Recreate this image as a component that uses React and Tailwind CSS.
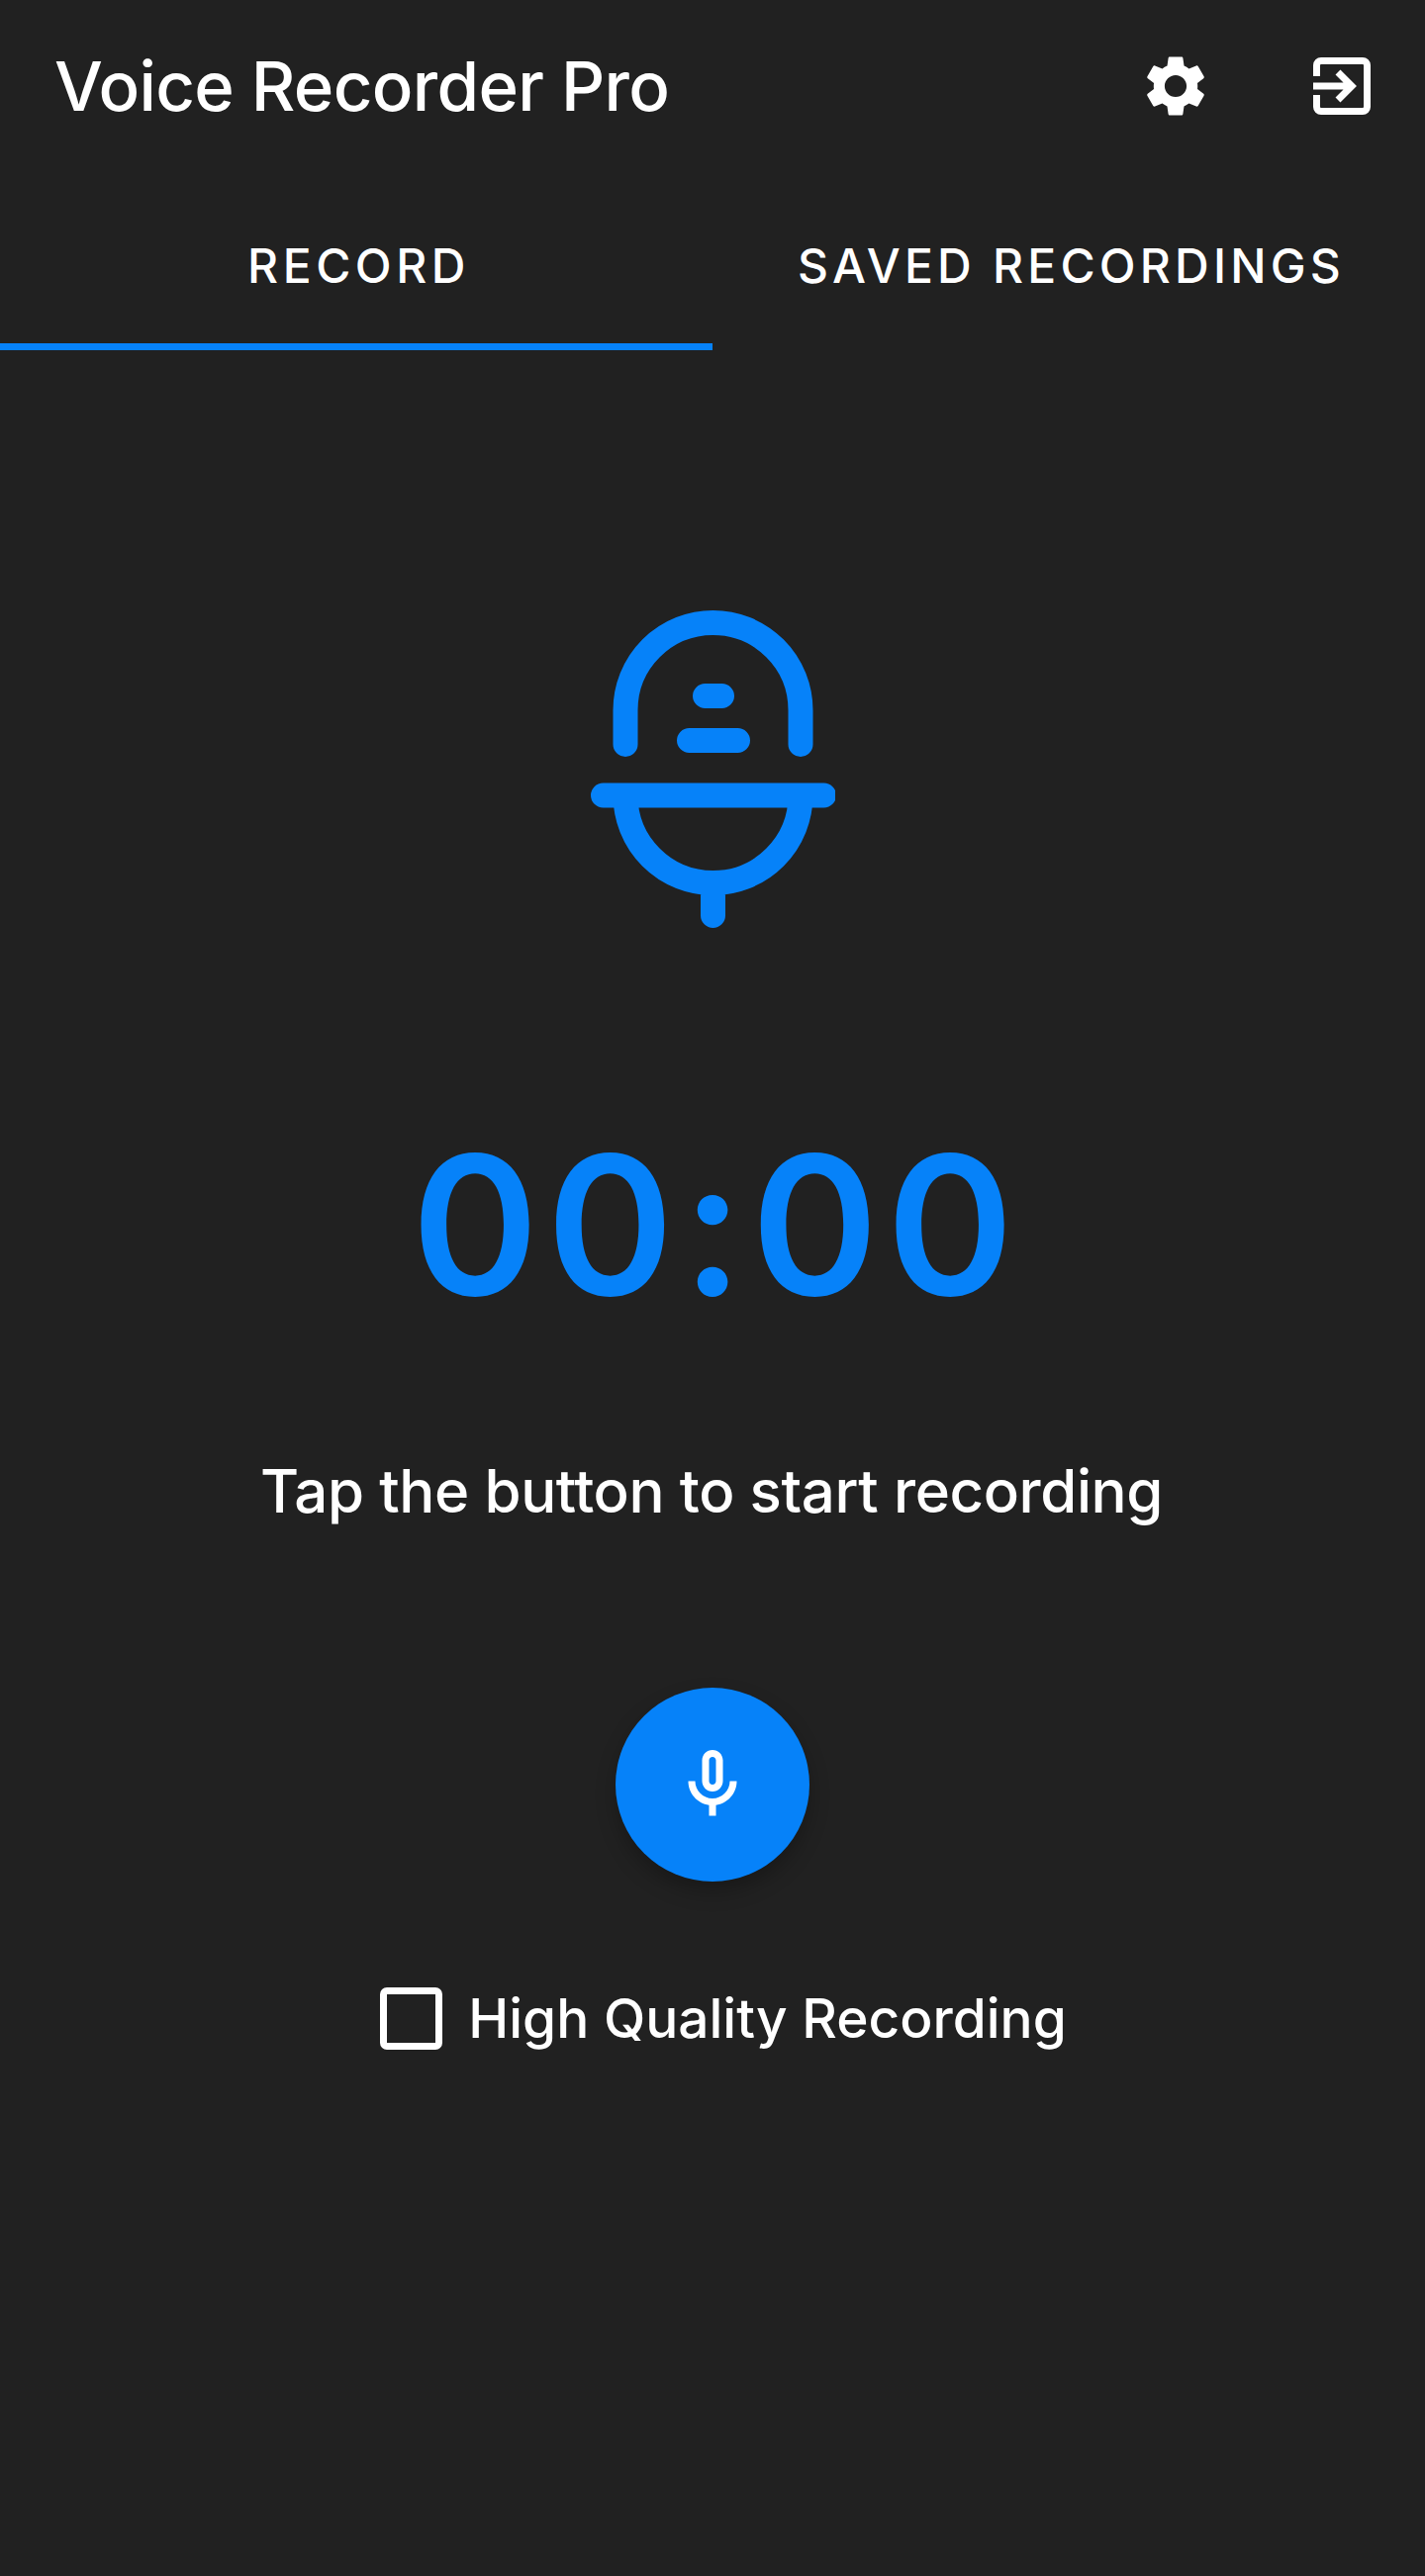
export default function App() {
  const font = { fontFamily: '"Inter", "Liberation Sans", sans-serif' };
  return (
    <div className="w-full h-[2604px] bg-[#212121] text-white flex flex-col overflow-hidden" style={font}>
      <header className="h-[174px] flex items-center pl-[55px]">
        <h1 className="text-[69px] font-medium leading-none tracking-[-0.7px] flex-1">Voice Recorder Pro</h1>
        <div className="flex items-center mr-[55px] gap-[102px]">
          <svg width="74" height="74" viewBox="0 0 24 24" fill="#fff">
            <path d="M19.14 12.94c.04-.3.06-.61.06-.94 0-.32-.02-.64-.07-.94l2.03-1.58c.18-.14.23-.41.12-.61l-1.92-3.32c-.12-.22-.37-.29-.59-.22l-2.39.96c-.5-.38-1.03-.7-1.62-.94l-.36-2.54c-.04-.24-.24-.41-.48-.41h-3.84c-.24 0-.43.17-.47.41l-.36 2.54c-.59.24-1.13.57-1.62.94l-2.39-.96c-.22-.08-.47 0-.59.22L2.74 8.87c-.12.21-.08.47.12.61l2.03 1.58c-.05.3-.09.63-.09.94s.02.64.07.94l-2.03 1.58c-.18.14-.23.41-.12.61l1.92 3.32c.12.22.37.29.59.22l2.39-.96c.5.38 1.03.7 1.62.94l.36 2.54c.05.24.24.41.48.41h3.84c.24 0 .44-.17.47-.41l.36-2.54c.59-.24 1.13-.56 1.62-.94l2.39.96c.22.08.47 0 .59-.22l1.92-3.32c.12-.22.07-.47-.12-.61l-2.01-1.58zM12 15.6c-1.98 0-3.6-1.62-3.6-3.6s1.62-3.6 3.6-3.6 3.6 1.62 3.6 3.6-1.62 3.6-3.6 3.6z" />
          </svg>
          <svg width="58" height="58" viewBox="0 0 58 58" fill="none" stroke="#fff" strokeWidth="7">
            <path d="M3.500 19V8a4.500 4.500 0 0 1 4.500-4.500h42a4.500 4.500 0 0 1 4.500 4.500v42a4.500 4.500 0 0 1-4.500 4.500H8a4.500 4.500 0 0 1-4.500-4.500V38" />
            <path d="M0 29h38M25 15l14 14-14 14" />
          </svg>
        </div>
      </header>
      <div className="flex h-[180px]">
        <div className="w-[720px] flex items-center justify-center border-b-[7px] border-[#0682f9] text-[48px] font-medium tracking-[4.5px] pt-[17px] pl-[5px]">RECORD</div>
        <div className="w-[720px] flex items-center justify-center pb-[7px] text-[48px] font-medium tracking-[4.2px] pt-[17px] pl-[5px]">SAVED RECORDINGS</div>
      </div>
      <main className="flex flex-col items-center">
        <svg className="mt-[263px]" width="247" height="321" viewBox="596 617 247 321" fill="none" stroke="#0682f9" strokeWidth="25" strokeLinecap="round">
          <path d="M631 752.500V718a88.500 88.500 0 0 1 177 0v34.500" />
          <path d="M711.500 703.500h17M695.500 748.500h49" />
          <path d="M608.500 804h223M631 804a88.500 88.500 0 0 0 177 0M719.500 903v22.500" />
        </svg>
        <div className="mt-[203px] pl-[8px] text-[195px] font-semibold tracking-[8px] leading-none text-[#0682f9]">00:00</div>
        <p className="mt-[141px] pr-[2px] text-[60px] font-medium leading-none tracking-[-0.4px]">Tap the button to start recording</p>
        <button className="mt-[169px] w-[196px] h-[196px] rounded-full bg-[#0682f9] flex items-center justify-center shadow-[0_10px_20px_rgba(0,0,0,0.25)]">
          <svg width="84" height="84" viewBox="0 0 24 24" fill="#fff">
            <path d="M12 14c1.660 0 3-1.340 3-3V5c0-1.660-1.340-3-3-3S9 3.340 9 5v6c0 1.660 1.340 3 3 3zm-1-9c0-.55.45-1 1-1s1 .45 1 1v6c0 .55-.45 1-1 1s-1-.45-1-1V5zm6 6c0 2.760-2.240 5-5 5s-5-2.240-5-5H5c0 3.530 2.610 6.430 6 6.920V21h2v-3.080c3.390-.49 6-3.390 6-6.920h-2z" />
          </svg>
        </button>
        <label className="mt-[107px] flex items-center pl-[22px]">
          <span className="w-[63px] h-[63px] rounded-[7px] border-[7px] border-white" />
          <span className="ml-[26px] text-[55px] font-medium leading-none">High Quality Recording</span>
        </label>
      </main>
    </div>
  );
}
